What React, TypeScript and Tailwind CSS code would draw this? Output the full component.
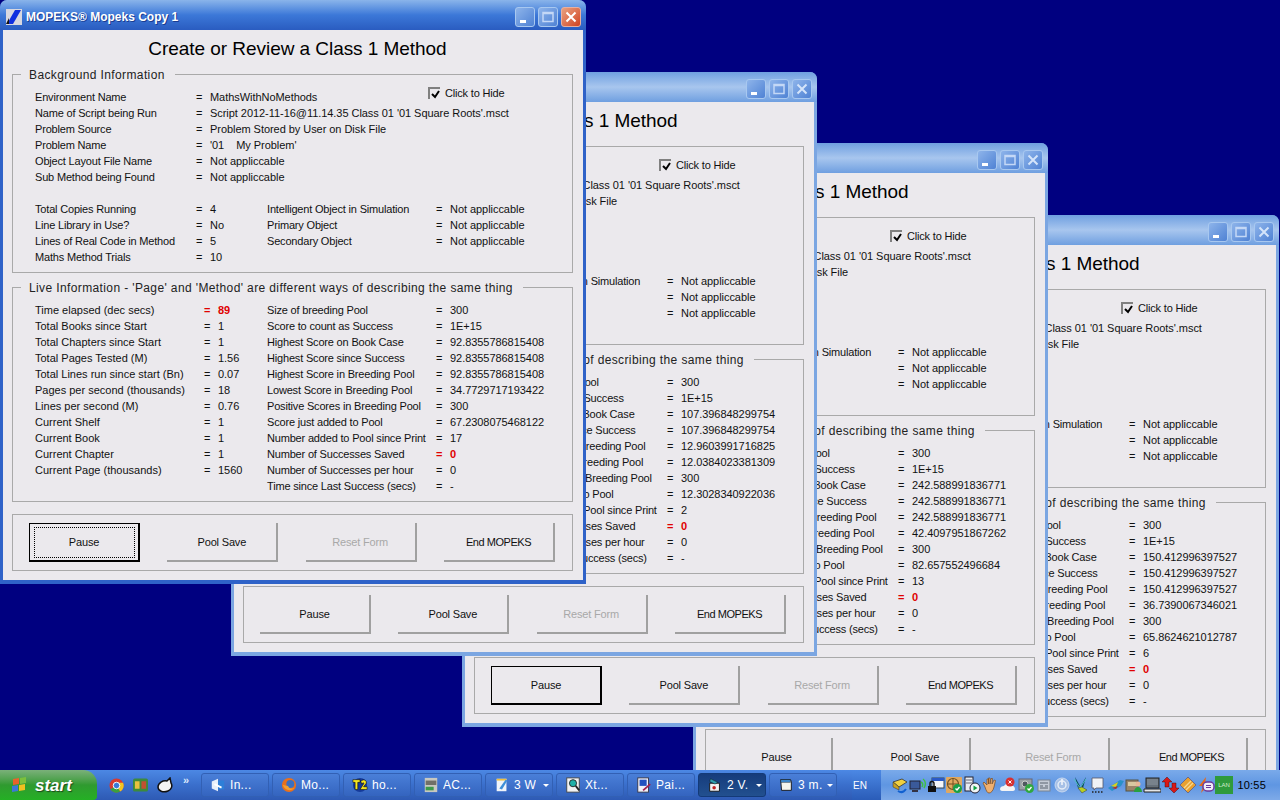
import { ReactNode } from "react";

// one row of label = value, columns are fixed so the "=" signs line up
function Row({ label, value, labelW, red, loose }: { label: string; value: string; labelW: string; red?: boolean; loose?: boolean }) {
  return (
    <div className="flex h-4 items-center whitespace-pre">
      <span className={`${labelW} ${loose ? "" : "tracking-[-0.18px]"}`}>{label}</span>
      <span className={`w-[14px] ${red ? "font-bold text-[#e00000]" : ""}`}>=</span>
      <span className={`tracking-[-0.05px] ${red ? "font-bold text-[#e00000]" : ""}`}>{value}</span>
    </div>
  );
}

function Group({ title, children, cls }: { title?: string; children: ReactNode; cls: string }) {
  return (
    <div className={`relative border border-[#a9a9a9] ${cls}`}>
      {title && (
        <span className="absolute -top-[8px] left-[8px] bg-[#ebe9ed] pl-2 pr-[10px] text-[12px] leading-4 tracking-[0.38px] text-[#222]">{title}</span>
      )}
      {children}
    </div>
  );
}

function Btn({ label, focus, frame, disabled, tight }: { label: string; focus?: boolean; frame?: boolean; disabled?: boolean; tight?: boolean }) {
  if (focus || frame) {
    return (
      <div className="flex h-[39px] w-[111px] items-center justify-center border border-r-2 border-b-2 border-black bg-[#ebe9ed]">
        <div className={`flex h-[31px] w-[101px] items-center justify-center tracking-[-0.18px] ${focus ? "border border-dotted border-black" : ""}`}>{label}</div>
      </div>
    );
  }
  return (
    <div
      className={`flex h-[39px] w-[111px] items-center justify-center border-r-2 border-b-2 border-[#a0a0a0] ${tight ? "tracking-[-0.45px]" : "tracking-[-0.18px]"} ${
        disabled ? "text-[#a8a8a8]" : ""
      }`}
    >
      {label}
    </div>
  );
}

function WinButton({ kind, active }: { kind: "min" | "max" | "close"; active: boolean }) {
  const red = kind === "close" && active;
  return (
    <div
      className={`flex h-[20px] w-[20px] items-center justify-center rounded-[3px] border ${
        red ? "border-[#e8b0a0] bg-gradient-to-br from-[#e8a080] to-[#d0401c]" : "border-[#a8c8f0] bg-gradient-to-br from-[#8eb4ea] to-[#4f82d4]"
      }`}
    >
      <svg width="14" height="14" viewBox="0 0 14 14">
        {kind === "min" && <rect x="2" y="10" width="6" height="3" fill="#fff" />}
        {kind === "max" && <path d="M2 2.5h10v9H2z M2 3.5h10" fill="none" stroke="#c4d8f6" strokeWidth="1.5" />}
        {kind === "close" && <path d="M2.5 2.5l9 9M11.5 2.5l-9 9" stroke={active ? "#fff" : "#d4e4fa"} strokeWidth="2" />}
      </svg>
    </div>
  );
}

type WinData = {
  left: string;
  top: string;
  z: string;
  active?: boolean;
  frame?: boolean;
  cols: string[];
};

const bg1 = ["Environment Name", "Name of Script being Run", "Problem Source", "Problem Name", "Object Layout File Name", "Sub Method being Found"];
const bgVal = ["MathsWithNoMethods", "Script 2012-11-16@11.14.35 Class 01 '01 Square Roots'.msct", "Problem Stored by User on Disk File", "'01    My Problem'", "Not appliccable", "Not appliccable"];
const bg2 = [
  ["Total Copies Running", "4", "Intelligent Object in Simulation"],
  ["Line Library in Use?", "No", "Primary Object"],
  ["Lines of Real Code in Method", "5", "Secondary Object"],
  ["Maths Method Trials", "10", ""],
];
const liveL = ["Time elapsed (dec secs)", "Total Books since Start", "Total Chapters since Start", "Total Pages Tested (M)", "Total Lines run since start (Bn)", "Pages per second (thousands)", "Lines per second (M)", "Current Shelf", "Current Book", "Current Chapter", "Current Page (thousands)"];
const liveLVal = ["89", "1", "1", "1.56", "0.07", "18", "0.76", "1", "1", "1", "1560"];
const liveR = ["Size of breeding Pool", "Score to count as Success", "Highest Score on Book Case", "Highest Score since Success", "Highest Score in Breeding Pool", "Lowest Score in Breeding Pool", "Positive Scores in Breeding Pool", "Score just added to Pool", "Number added to Pool since Print", "Number of Successes Saved", "Number of Successes per hour", "Time since Last Success (secs)"];

function Window({ w }: { w: WinData }) {
  return (
    <div className={`absolute flex h-[584px] w-[586px] flex-col rounded-t-[7px] ${w.left} ${w.top} ${w.z} ${w.active ? "bg-[#2f62c8]" : "bg-[#7ba6e2]"}`}>
      <div
        className={`flex h-[30px] shrink-0 items-center rounded-t-[7px] pl-[6px] pr-[5px] pt-[3px] ${
          w.active ? "bg-gradient-to-b from-[#8ab4ea] via-[#3c78d8] to-[#2a5cc0]" : "bg-gradient-to-b from-[#6f9fe0] via-[#a8c6ee] to-[#6f9fe0]"
        }`}
      >
        <svg width="16" height="16" viewBox="0 0 16 16" className="shrink-0">
          <rect width="16" height="16" fill="#d8d8e0" />
          <path d="M1 15L9 1h6L7 15z" fill="#1030e0" />
          <path d="M0 15l3-6v6z" fill="#111" />
        </svg>
        <span className="ml-[4px] text-[12px] font-bold text-white [text-shadow:1px_1px_0_#1a3c90]">MOPEKS® Mopeks Copy 1</span>
        <div className="ml-auto flex gap-[3px]">
          <WinButton kind="min" active={!!w.active} />
          <WinButton kind="max" active={!!w.active} />
          <WinButton kind="close" active={!!w.active} />
        </div>
      </div>
      <div className="mx-[3px] mb-[4px] flex flex-1 flex-col bg-[#ebe9ed] pl-[9px] pr-[10px] pt-[6px] text-[11px] leading-4 text-[#111]">
        <h1 className="h-[38px] pl-[10px] text-center text-[19px] leading-[26px] tracking-[-0.05px] text-black">Create or Review a Class 1 Method</h1>
        <Group title="Background Information" cls="h-[199px] pl-[22px] pt-[14px]">
          <label className="absolute left-[415px] top-[10px] flex items-center gap-[5px] tracking-[-0.18px]">
            <span className="flex h-[12px] w-[12px] items-center justify-center border-t-2 border-l-2 border-[#808080] bg-[#ebe9ed]">
              <svg width="9" height="9" viewBox="0 0 9 9"><path d="M1 4l3 3 4-6" fill="none" stroke="#000" strokeWidth="2" /></svg>
            </span>
            Click to Hide
          </label>
          {bg1.map((l, i) => (
            <Row key={l} label={l} value={bgVal[i]} labelW="w-[161px]" />
          ))}
          <div className="h-4" />
          {bg2.map((r) => (
            <div key={r[0]} className="flex h-4 items-center whitespace-pre">
              <span className="w-[161px] tracking-[-0.18px]">{r[0]}</span>
              <span className="w-[14px]">=</span>
              <span className="w-[57px]">{r[1]}</span>
              {r[2] && (
                <>
                  <span className="w-[169px] tracking-[-0.18px]">{r[2]}</span>
                  <span className="w-[14px]">=</span>
                  <span className="tracking-[-0.05px]">Not appliccable</span>
                </>
              )}
            </div>
          ))}
        </Group>
        <Group title="Live Information - 'Page' and 'Method' are different ways of describing the same thing" cls="mt-[14px] h-[215px] pl-[22px] pt-[14px]">
          <div className="flex">
            <div className="w-[232px] shrink-0">
              {liveL.map((l, i) => (
                <Row key={l} label={l} value={liveLVal[i]} labelW="w-[169px]" red={i === 0} loose />
              ))}
            </div>
            <div>
              {liveR.map((l, i) => (
                <Row key={l} label={l} value={w.cols[i]} labelW="w-[169px]" red={i === 9} />
              ))}
            </div>
          </div>
        </Group>
        <Group cls="mt-[12px] flex h-[57px] items-center justify-between pl-[16px] pr-[17px] text-center">
          <Btn label="Pause" focus={w.active} frame={w.frame} />
          <Btn label="Pool Save" />
          <Btn label="Reset Form" disabled />
          <Btn label="End MOPEKS" tight />
        </Group>
      </div>
    </div>
  );
}

const windows: WinData[] = [
  {
    left: "left-0", top: "top-0", z: "z-40", active: true,
    cols: ["300", "1E+15", "92.8355786815408", "92.8355786815408", "92.8355786815408", "34.7729717193422", "300", "67.2308075468122", "17", "0", "0", "-"],
  },
  {
    left: "left-[231px]", top: "top-[72px]", z: "z-30",
    cols: ["300", "1E+15", "107.396848299754", "107.396848299754", "12.9603991716825", "12.0384023381309", "300", "12.3028340922036", "2", "0", "0", "-"],
  },
  {
    left: "left-[462px]", top: "top-[143px]", z: "z-20", frame: true,
    cols: ["300", "1E+15", "242.588991836771", "242.588991836771", "242.588991836771", "42.4097951867262", "300", "82.657552496684", "13", "0", "0", "-"],
  },
  {
    left: "left-[693px]", top: "top-[215px]", z: "z-10",
    cols: ["300", "1E+15", "150.412996397527", "150.412996397527", "150.412996397527", "36.7390067346021", "300", "65.8624621012787", "6", "0", "0", "-"],
  },
];

function TaskIcon({ kind }: { kind: string }) {
  return (
    <svg width="16" height="16" viewBox="0 0 18 18" className="shrink-0">
      {kind === "mail" && <><path d="M2 5l7-3v14l-7-3z" fill="#e8f0fa" /><path d="M9 4h7v10H9z" fill="#2e7fd8" /><path d="M5 8l8 4" stroke="#fff" strokeWidth="2" /></>}
      {kind === "fox" && <><circle cx="9" cy="9" r="8" fill="#e8701c" /><circle cx="10.5" cy="8" r="4.5" fill="#3a6fc0" /><path d="M2 9c2 6 9 8 13 3-3 2-6 1-7-2z" fill="#f2a030" /></>}
      {kind === "t2" && <><circle cx="9" cy="9" r="8" fill="#153a9a" /><path d="M1 3h8v3H6.5v8h-3V6H1z" fill="#f8e820" stroke="#000" strokeWidth="0.6" /><path d="M10 5c2-3 7-2 6 2l-3 4h4v3h-8l4-6c1-2-1-2-2 0z" fill="#f8e820" stroke="#000" strokeWidth="0.6" /></>}
      {kind === "ac" && <><rect x="2" y="1" width="14" height="16" fill="#c8c8c0" /><rect x="3" y="4" width="12" height="5" fill="#707068" /><rect x="3" y="11" width="9" height="4" fill="#3c9a4c" /></>}
      {kind === "note" && <><path d="M3 2h11v14H3z" fill="#f0f4fa" /><path d="M3 2h11v2H3z" fill="#f0c040" /><path d="M6 13l7-10 2 1-6 10z" fill="#3f8fd8" /></>}
      {kind === "xt" && <><rect x="2" y="1" width="14" height="16" fill="#f2f2f2" stroke="#444" /><circle cx="9" cy="7" r="4" fill="#20b0a8" stroke="#222" /><path d="M12 10l4 5" stroke="#222" strokeWidth="2" /></>}
      {kind === "paint" && <><rect x="2" y="1" width="12" height="16" fill="#f0f0f8" stroke="#334" /><rect x="4" y="3" width="8" height="7" fill="#2050c0" /><path d="M8 15l8-7" stroke="#a02050" strokeWidth="2" /></>}
      {kind === "vb" && <><path d="M3 7h11v9H3z" fill="#f2f2f2" stroke="#111" /><path d="M4 2l8 4-3 2-6-3z" fill="#30a0b0" stroke="#111" strokeWidth="0.5" /><circle cx="8" cy="12" r="2" fill="#c02020" /></>}
      {kind === "folder" && <><path d="M3 3h11l1 2v10H4z" fill="#f4f4ec" stroke="#111" /><path d="M3 3h11v3H3z" fill="#3f8fd8" stroke="#111" strokeWidth="0.5" /></>}
    </svg>
  );
}

const tasks = [
  { icon: "mail", label: "In..." },
  { icon: "fox", label: "Mo..." },
  { icon: "t2", label: "ho..." },
  { icon: "ac", label: "AC..." },
  { icon: "note", label: "3 W", arrow: true },
  { icon: "xt", label: "Xt..." },
  { icon: "paint", label: "Pai..." },
  { icon: "vb", label: "2 V.", arrow: true, on: true },
  { icon: "folder", label: "3 m.", arrow: true },
];

// tray icons, left to right
const tray: ReactNode[] = [
  <><path d="M2 6l9-3 5 3-8 5z" fill="#f0d040" stroke="#333" strokeWidth="0.8" /><path d="M2 6v5l6 3V11z" fill="#c8a020" stroke="#333" strokeWidth="0.5" /><path d="M7 15c3 2 6 1 8-2" fill="none" stroke="#1060d0" strokeWidth="2" /></>,
  <><rect x="1" y="5" width="10" height="8" fill="#3a5a9a" stroke="#223" /><rect x="3" y="14" width="6" height="2" fill="#334" /><path d="M12 6c2 1 2 3 1 5M14 3c3 2 3 6 1 9" fill="none" stroke="#40c040" strokeWidth="1.4" /></>,
  <><rect x="5" y="2" width="12" height="10" fill="#f4f6fb" stroke="#345" /><rect x="5" y="2" width="12" height="3" fill="#2a5ac8" /><rect x="1" y="10" width="8" height="6" fill="#111" /><path d="M3 10V7.5a2 2 0 0 1 4 0V10" fill="none" stroke="#111" strokeWidth="1.4" /></>,
  <><rect x="1" y="1" width="16" height="16" rx="1" fill="#e0a860" /><circle cx="8" cy="8" r="5.5" fill="none" stroke="#705020" strokeWidth="1.2" /><path d="M2.5 8h11M8 2.5v11" stroke="#705020" /><circle cx="12.5" cy="12.5" r="4.5" fill="#18a048" /><path d="M10.5 12.5l1.5 1.5 2.5-3" fill="none" stroke="#fff" strokeWidth="1.4" /></>,
  <><rect x="2" y="1" width="8" height="14" fill="#e8ecf2" stroke="#223" /><path d="M3 4h6M3 7h6" stroke="#667" /><circle cx="12" cy="12" r="5" fill="#f4f6f8" stroke="#223" /><path d="M10.5 9.5v5l4-2.5z" fill="#10a040" /></>,
  <path d="M4 11L2 7l1-1 3 3V3h1.5v5V2H9v6l1-5.5h1.5L11 8l2-4 1.5.5L13 11c-1 4-3 6-5 6s-3-3-4-6z" fill="#eeb070" stroke="#7a4a20" strokeWidth="0.7" />,
  <><path d="M1 13c0-2 2-3 4-3 1-2 4-3 6-1 3 0 5 2 5 4 0 1-1 2-2 2H3c-1 0-2-1-2-2z" fill="#f4f4f4" /><circle cx="11" cy="6" r="4.5" fill="#d83030" /><path d="M9.5 4.5l3 3M12.5 4.5l-3 3" stroke="#fff" /></>,
  <><rect x="2" y="3" width="13" height="11" fill="#9aa0a6" stroke="#667" /><circle cx="8" cy="8" r="3" fill="#505860" stroke="#ccc" /><circle cx="12.5" cy="12.5" r="4.5" fill="#30a840" /><path d="M10.5 12.5l1.5 1.5 2.5-3" fill="none" stroke="#fff" strokeWidth="1.3" /></>,
  <><rect x="3" y="4" width="12" height="11" fill="#c4ccd6" stroke="#7a8490" /><path d="M5 7h8M5 10h3M10 10h3M5 12h8" stroke="#5a6470" /></>,
  <><circle cx="9" cy="9" r="7" fill="#a6c0e6" stroke="#c8d8f0" /><circle cx="9" cy="9" r="4" fill="none" stroke="#e6eef8" strokeWidth="1.4" /><path d="M9 3v6" stroke="#f0f4fa" strokeWidth="1.6" /></>,
  <><path d="M4 1l5 9-2 2z" fill="#0c4a5a" /><path d="M15 1l-5 9 2 2z" fill="#0c4a5a" /><path d="M3 3l6 9M15 3l-6 9" stroke="#50c0c8" /><path d="M7 12l4-1 5 3-5 3z" fill="#b8d020" stroke="#334" strokeWidth="0.5" /></>,
  <><path d="M3 2h11v10H7l-2 2v-2H3z" fill="#f0f2f6" stroke="#556" strokeWidth="0.8" /><path d="M3 16h12" stroke="#222" strokeWidth="1.6" strokeDasharray="1.5 1.5" /></>,
  <><path d="M1 12L13 4l4 1-3 5-9 5z" fill="#2a90c8" /><path d="M4 10l7-4-2 5z" fill="#d8d020" /><path d="M5 12l6-2-2 3z" fill="#c02828" /></>,
  <><rect x="1" y="4" width="12" height="11" fill="#9a8468" stroke="#554" /><rect x="3" y="6" width="8" height="4" fill="#d8c8a0" /><circle cx="13" cy="8" r="2.5" fill="#e8b898" /><path d="M9 16c0-3 2-5 4-5s4 2 4 5z" fill="#28a040" /></>,
  <><rect x="3" y="2" width="13" height="10" fill="#66707a" stroke="#222" /><path d="M4 4h11M4 6h11M4 8h11" stroke="#8a949e" /><path d="M1 13h17v3H1z" fill="#e4e6e8" stroke="#222" /></>,
  <><path d="M6 1l5 5H8v5H4V6H1z" fill="#d81818" stroke="#300" strokeWidth="0.4" /><path d="M13 17l5-5h-3V7h-4v5H8z" fill="#d81818" stroke="#300" strokeWidth="0.4" /></>,
  <><path d="M9 1l8 8-8 8-8-8z" fill="#e8a030" stroke="#6a6a8a" /><path d="M5 12l7-7M7 14l7-7" stroke="#f6d890" strokeWidth="1.4" /></>,
  <><path d="M9 1L2 10h4l-2 7 8-9H8z" fill="#e86818" /><rect x="6" y="6" width="11" height="9" rx="4" fill="#f0ecf8" stroke="#6a3a9a" strokeWidth="1.5" /><path d="M9 9.5h5M9 11.5h5" stroke="#6a3a9a" /></>,
];

export default function App() {
  return (
    <div className="relative h-[800px] w-[1280px] overflow-hidden bg-[#000080] font-['Liberation_Sans',Arial,sans-serif]">
      {windows.map((w) => (
        <Window key={w.left} w={w} />
      ))}
      <div className="absolute bottom-0 left-0 z-50 flex h-[30px] w-full items-center bg-gradient-to-b from-[#4c88e4] via-[#3a6fcc] to-[#2e5ab4] text-[12px] text-white">
        <div className="flex h-full w-[97px] shrink-0 items-center rounded-tr-[14px] rounded-br-[4px] bg-gradient-to-b from-[#7ab07a] via-[#2f9a2f] to-[#24b024] pl-[11px]">
          <svg width="18" height="18" viewBox="0 0 18 18">
            <path d="M2 3l6-1v6l-6 1z" fill="#e8622c" />
            <path d="M9 2l6-1v6l-6 1z" fill="#7cc03c" />
            <path d="M1 10l6-1v6l-6 1z" fill="#3c78d8" />
            <path d="M8 9l6-1v6l-6 1z" fill="#f0c020" />
          </svg>
          <span className="ml-[6px] text-[17px] font-bold italic leading-none [text-shadow:1px_1px_1px_#1a4a1a]">start</span>
        </div>
        <div className="ml-[10px] flex w-[94px] shrink-0 items-center gap-[9px] pl-[2px]">
          <svg width="15" height="15" viewBox="0 0 16 16" className="shrink-0">
            <circle cx="8" cy="8" r="7.5" fill="#d83a30" />
            <path d="M8 8L1.5 12A7.5 7.5 0 0 0 12 14.5z" fill="#3aa040" />
            <path d="M8 8l4 6.5A7.5 7.5 0 0 0 15 5H8z" fill="#f2c420" />
            <circle cx="8" cy="8" r="3.5" fill="#3a78d8" stroke="#fff" />
          </svg>
          <svg width="15" height="14" viewBox="0 0 16 14" className="shrink-0">
            <rect width="16" height="14" rx="2" fill="#3c8a3c" />
            <rect x="2" y="3" width="5" height="8" fill="#e8c040" />
            <rect x="9" y="3" width="5" height="8" fill="#c05030" />
          </svg>
          <svg width="17" height="17" viewBox="0 0 17 17" className="shrink-0">
            <path d="M1 10c0-4 5-7 9-6l3-3 1 5c2 3 0 7-3 8-5 2-10 0-10-4z" fill="#f4f4f4" stroke="#111" strokeWidth="1.5" />
          </svg>
          <span className="-mt-[10px] text-[11px] font-bold leading-none text-[#dbe8fb]">»</span>
        </div>
        <div className="flex items-center gap-[3px]">
          {tasks.map((t) => (
            <div
              key={t.icon}
              className={`flex h-[24px] w-[68px] items-center rounded-[3px] border pl-[8px] pr-[3px] ${
                t.on ? "border-[#143a78] bg-gradient-to-b from-[#163c7c] to-[#22508f]" : "border-[#3260b4] bg-gradient-to-b from-[#4a7fd8] to-[#3464bf]"
              }`}
            >
              <TaskIcon kind={t.icon} />
              <span className="ml-[4px] truncate tracking-[0.3px]">{t.label}</span>
              {t.arrow && <span className="ml-auto h-0 w-0 border-x-[3px] border-t-[3px] border-x-transparent border-t-white" />}
            </div>
          ))}
        </div>
        <div className="ml-[15px] flex h-full w-[29px] shrink-0 items-center bg-gradient-to-b from-[#4c88e4] to-[#2a5cb8] pl-[1px] text-[10px]">EN</div>
        <div className="flex h-full flex-1 items-center bg-gradient-to-b from-[#7aaaea] via-[#5f96e2] to-[#7eaae8] pl-[10px] pr-[14px] text-black">
          {tray.map((icon, i) => (
            <svg key={i} width="18" height="18" viewBox="0 0 18 18" className="shrink-0">
              {icon}
            </svg>
          ))}
          <span className="flex h-[18px] w-[18px] shrink-0 items-center justify-center bg-[#2f9a3c] text-[6px] text-[#cfeed0]">LAN</span>
          <span className="ml-auto text-[11px] tracking-[0.2px]">10:55</span>
        </div>
      </div>
    </div>
  );
}
